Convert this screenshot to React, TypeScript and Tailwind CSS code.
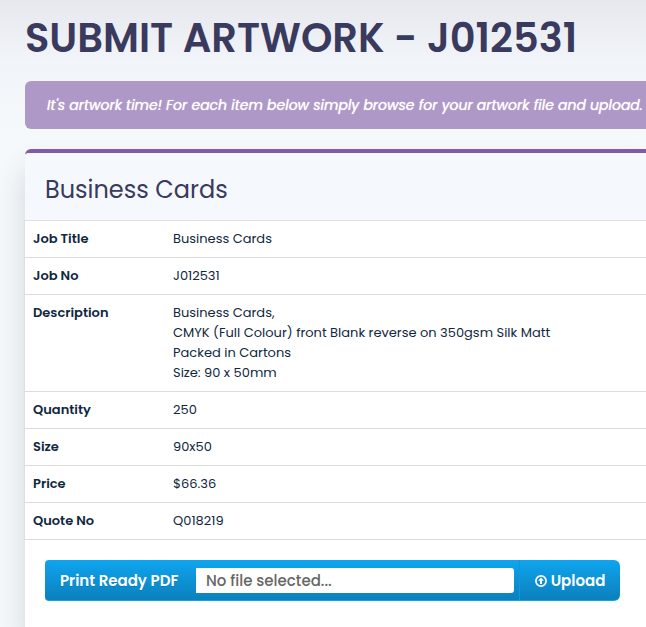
import { useState } from "react";

const font = "font-['Poppins','Inter',sans-serif]";

const jobDetails = [
  { label: "Job Title", lines: ["Business Cards"] },
  { label: "Job No", lines: ["J012531"] },
  {
    label: "Description",
    lines: [
      "Business Cards,",
      "CMYK (Full Colour) front Blank reverse on 350gsm Silk Matt",
      "Packed in Cartons",
      "Size: 90 x 50mm",
    ],
  },
  { label: "Quantity", lines: ["250"] },
  { label: "Size", lines: ["90x50"] },
  { label: "Price", lines: ["$66.36"] },
  { label: "Quote No", lines: ["Q018219"] },
];

function UploadIcon() {
  return (
    <svg viewBox="0 0 12 12" className="size-3 shrink-0" aria-hidden="true">
      <circle cx="6" cy="6" r="5.1" fill="none" stroke="currentColor" strokeWidth="1.7" />
      <path d="M6 2.6 L8.8 5.8 H7 V9 H5 V5.8 H3.2 Z" fill="currentColor" />
    </svg>
  );
}

// Blue bar with the file picker and the upload button
function UploadBar() {
  const [fileName, setFileName] = useState("");

  return (
    <form
      onSubmit={(e) => e.preventDefault()}
      className="flex h-[41px] max-w-[575px] overflow-hidden rounded-l-[4px] rounded-r-md border-b border-[#0ea5ee] bg-gradient-to-b from-[#0fa5ee] to-[#0b80bd] text-[15px] font-medium text-white text-shadow-2xs"
    >
      <label htmlFor="artwork" className="flex w-[151px] shrink-0 items-center pt-px pl-[15px] font-semibold whitespace-nowrap">
        Print Ready PDF
      </label>
      <label
        htmlFor="artwork"
        className="mt-2 mb-[7px] flex min-w-0 flex-1 cursor-pointer items-center rounded-r-[3px] bg-white px-[10px] text-[#666] text-shadow-none"
      >
        <span className="truncate">{fileName || "No file selected..."}</span>
        <input
          id="artwork"
          type="file"
          accept="application/pdf"
          className="sr-only"
          onChange={(e) => setFileName(e.target.files?.[0]?.name ?? "")}
        />
      </label>
      <button
        type="submit"
        className="ml-[5px] flex w-[101px] shrink-0 cursor-pointer items-center justify-center gap-1 border-l border-[#0f97dc] pt-px font-semibold"
      >
        <UploadIcon />
        Upload
      </button>
    </form>
  );
}

export default function App() {
  return (
    <main
      className={`${font} min-h-screen overflow-hidden bg-[#f5f9fc] bg-[linear-gradient(#e6e8ed,#f1f4f8_60px,#f5f9fc_140px)] pl-[25px] text-[13px] leading-5 text-[#0f2840]`}
    >
      <h1 className="pt-[14px] text-[40px] leading-[48px] font-semibold whitespace-nowrap text-[#393a5d]">
        SUBMIT ARTWORK - J012531
      </h1>

      <p className="mt-[19px] rounded-l-md bg-[#ae98c8] py-[14px] pl-[22px] text-[14px] whitespace-nowrap text-white italic [text-shadow:0_0_1px_#fff]">
        It's artwork time! For each item below simply browse for your artwork file and upload.
      </p>

      <section className="mt-5 min-h-[478px] rounded-tl-md border-t-4 border-[#835aa7] bg-white shadow-[0_20px_30px_rgba(40,50,60,0.17)]">
        <h2 className="rounded-tl-sm bg-[#f5f8fc] px-5 pt-[21px] pb-[14px] text-[24px] leading-8 text-[#393a5d]">
          Business Cards
        </h2>

        <table className="-ml-px w-[calc(100%+1px)] border-separate border-spacing-0 border-t border-l border-[#dcdfe5]">
          <tbody>
            {jobDetails.map((row) => (
              <tr key={row.label}>
                <th
                  scope="row"
                  className="w-[140px] border-b border-[#dcdcde] p-2 text-left align-top font-semibold"
                >
                  {row.label}
                </th>
                <td className="border-b border-[#dcdcde] p-2 align-top">
                  {row.lines.map((line) => (
                    <div key={line}>{line}</div>
                  ))}
                </td>
              </tr>
            ))}
          </tbody>
        </table>

        <div className="px-5 py-5">
          <UploadBar />
        </div>
      </section>
    </main>
  );
}
